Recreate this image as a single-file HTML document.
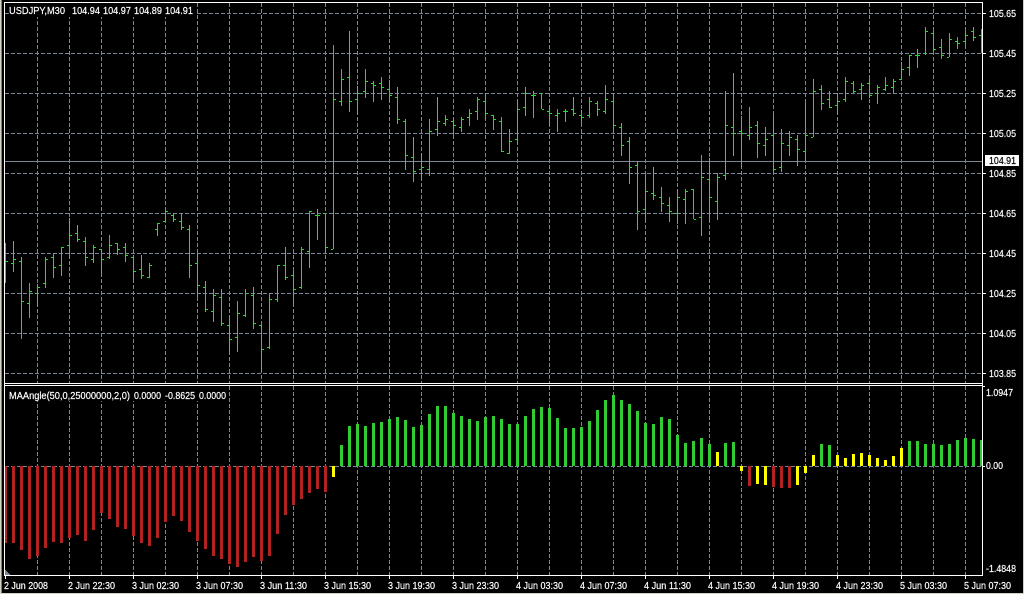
<!DOCTYPE html>
<html><head><meta charset="utf-8"><title>USDJPY,M30</title>
<style>
html,body{margin:0;padding:0;background:#000;width:1024px;height:594px;overflow:hidden}
svg{display:block}
text{font-family:"Liberation Sans",sans-serif;font-size:10.5px;fill:#fff;stroke:#fff;stroke-width:.2px}
</style></head><body>
<svg width="1024" height="594" viewBox="0 0 1024 594" xmlns="http://www.w3.org/2000/svg">
<rect width="1024" height="594" fill="#000"/>
<g shape-rendering="crispEdges">
<path d="M0 0V594M1023 0V594M0 593.5H1024" stroke="#d4d0c8" fill="none" transform="translate(.5 0)"/>
<rect x="1" y="0" width="1" height="594" fill="#808080"/>
<rect x="0" y="593" width="1024" height="1" fill="#d4d0c8"/>
<!-- grid -->
<g stroke="#778899" fill="none" stroke-dasharray="4 2">
<path d="M5 13.5H982M5 53.5H982M5 93.5H982M5 133.5H982M5 173.5H982M5 213.5H982M5 253.5H982M5 293.5H982M5 333.5H982M5 373.5H982M5 466.5H982"/>
<path d="M37.5 3V383M69.5 3V383M101.5 3V383M133.5 3V383M165.5 3V383M197.5 3V383M229.5 3V383M261.5 3V383M293.5 3V383M325.5 3V383M357.5 3V383M389.5 3V383M421.5 3V383M453.5 3V383M485.5 3V383M517.5 3V383M549.5 3V383M581.5 3V383M613.5 3V383M645.5 3V383M677.5 3V383M709.5 3V383M741.5 3V383M773.5 3V383M805.5 3V383M837.5 3V383M869.5 3V383M901.5 3V383M933.5 3V383M965.5 3V383"/>
<path d="M37.5 386V575M69.5 386V575M101.5 386V575M133.5 386V575M165.5 386V575M197.5 386V575M229.5 386V575M261.5 386V575M293.5 386V575M325.5 386V575M357.5 386V575M389.5 386V575M421.5 386V575M453.5 386V575M485.5 386V575M517.5 386V575M549.5 386V575M581.5 386V575M613.5 386V575M645.5 386V575M677.5 386V575M709.5 386V575M741.5 386V575M773.5 386V575M805.5 386V575M837.5 386V575M869.5 386V575M901.5 386V575M933.5 386V575M965.5 386V575"/>
</g>
<!-- covers behind legends -->
<rect x="9" y="3" width="187" height="14" fill="#000"/>
<rect x="9" y="386" width="218" height="15" fill="#000"/>
<!-- price line -->
<path d="M5 161.5H982" stroke="#778899" fill="none"/>
<!-- OHLC bars -->
<path fill="none" stroke="#22e022" d="
M5.5 243V283M6 261.5h2
M13.5 241V272M11 263.5h2M14 259.5h2
M21.5 257V339M19 261.5h2M22 301.5h2
M29.5 283V318M27 303.5h2M30 291.5h2
M37.5 284V306M35 293.5h2M38 287.5h2
M45.5 257V288M43 283.5h2M46 259.5h2
M53.5 253V278M51 257.5h2M54 267.5h2
M61.5 247V276M59 265.5h2M62 247.5h2
M69.5 218V258M67 245.5h2M70 235.5h2
M77.5 225V242M75 233.5h2M78 239.5h2
M85.5 237V266M83 241.5h2M86 257.5h2
M93.5 245V263M91 259.5h2M94 247.5h2
M101.5 249V274M99 249.5h2M102 259.5h2
M109.5 235V259M107 257.5h2M110 245.5h2
M117.5 243V255M115 243.5h2M118 249.5h2
M125.5 243V262M123 247.5h2M126 255.5h2
M133.5 255V280M131 257.5h2M134 271.5h2
M141.5 255V279M139 269.5h2M142 275.5h2
M149.5 263V278M147 277.5h2M150 265.5h2
M157.5 223V236M155 229.5h2M158 223.5h2
M165.5 211V222M163 221.5h2M166 211.5h2
M173.5 213V222M171 215.5h2M174 219.5h2
M181.5 213V230M179 221.5h2M182 227.5h2
M189.5 225V278M187 229.5h2M190 265.5h2
M197.5 253V297M195 263.5h2M198 285.5h2
M205.5 281V312M203 287.5h2M206 309.5h2
M213.5 289V322M211 311.5h2M214 295.5h2
M221.5 289V326M219 297.5h2M222 323.5h2
M229.5 315V352M227 325.5h2M230 339.5h2
M237.5 301V352M235 337.5h2M238 313.5h2
M245.5 289V317M243 315.5h2M246 293.5h2
M253.5 287V329M251 295.5h2M254 323.5h2
M261.5 325V371M259 325.5h2M262 349.5h2
M269.5 293V349M267 347.5h2M270 299.5h2
M277.5 265V302M275 299.5h2M278 265.5h2
M285.5 247V280M283 265.5h2M286 277.5h2
M293.5 271V303M291 275.5h2M294 289.5h2
M301.5 247V289M299 287.5h2M302 249.5h2
M309.5 211V268M307 251.5h2M310 211.5h2
M317.5 209V240M315 215.5h2M318 215.5h2
M325.5 213V254M323 213.5h2M326 247.5h2
M333.5 45V249M331 249.5h2M334 99.5h2
M341.5 69V106M339 101.5h2M342 79.5h2
M349.5 31V112M347 77.5h2M350 101.5h2
M357.5 86V114M355 99.5h2M358 93.5h2
M365.5 69V98M363 91.5h2M366 81.5h2
M373.5 81V102M371 83.5h2M374 85.5h2
M381.5 77V100M379 83.5h2M382 87.5h2
M389.5 80V102M387 89.5h2M390 95.5h2
M397.5 87V124M395 97.5h2M398 119.5h2
M405.5 119V170M403 121.5h2M406 155.5h2
M413.5 137V182M411 157.5h2M414 171.5h2
M421.5 153V179M419 169.5h2M422 167.5h2
M429.5 119V176M427 169.5h2M430 131.5h2
M437.5 97V136M435 129.5h2M438 121.5h2
M445.5 115V126M443 123.5h2M446 119.5h2
M453.5 119V135M451 121.5h2M454 125.5h2
M461.5 117V132M459 127.5h2M462 119.5h2
M469.5 109V126M467 117.5h2M470 113.5h2
M477.5 97V120M475 111.5h2M478 99.5h2
M485.5 93V119M483 101.5h2M486 113.5h2
M493.5 115V130M491 115.5h2M494 119.5h2
M501.5 117V152M499 121.5h2M502 151.5h2
M509.5 129V154M507 153.5h2M510 141.5h2
M517.5 101V144M515 139.5h2M518 109.5h2
M525.5 87V116M523 107.5h2M526 93.5h2
M533.5 91V118M531 95.5h2M534 95.5h2
M541.5 93V109M539 93.5h2M542 109.5h2
M549.5 105V125M547 111.5h2M550 113.5h2
M557.5 109V132M555 115.5h2M558 113.5h2
M565.5 109V122M563 111.5h2M566 111.5h2
M573.5 97V116M571 109.5h2M574 113.5h2
M581.5 110V124M579 115.5h2M582 117.5h2
M589.5 97V118M587 115.5h2M590 101.5h2
M597.5 101V116M595 103.5h2M598 109.5h2
M605.5 85V114M603 111.5h2M606 99.5h2
M613.5 93V131M611 101.5h2M614 125.5h2
M621.5 123V156M619 127.5h2M622 145.5h2
M629.5 137V184M627 141.5h2M630 167.5h2
M637.5 162V230M635 165.5h2M638 211.5h2
M645.5 175V220M643 209.5h2M646 191.5h2
M653.5 167V200M651 193.5h2M654 195.5h2
M661.5 187V212M659 197.5h2M662 203.5h2
M669.5 197V222M667 205.5h2M670 211.5h2
M677.5 190V224M675 213.5h2M678 197.5h2
M685.5 189V224M683 199.5h2M686 191.5h2
M693.5 189V219M691 189.5h2M694 219.5h2
M701.5 155V236M699 217.5h2M702 177.5h2
M709.5 158V222M707 179.5h2M710 197.5h2
M717.5 173V220M715 201.5h2M718 177.5h2
M725.5 91V180M723 175.5h2M726 125.5h2
M733.5 73V156M731 127.5h2M734 133.5h2
M741.5 116V167M739 131.5h2M742 133.5h2
M749.5 107V140M747 135.5h2M750 127.5h2
M757.5 121V158M755 125.5h2M758 143.5h2
M765.5 127V156M763 145.5h2M766 139.5h2
M773.5 115V172M771 135.5h2M774 169.5h2
M781.5 129V172M779 167.5h2M782 143.5h2
M789.5 131V156M787 145.5h2M790 137.5h2
M797.5 135V166M795 139.5h2M798 149.5h2
M805.5 103V161M803 151.5h2M806 135.5h2
M813.5 79V137M811 137.5h2M814 91.5h2
M821.5 85V110M819 89.5h2M822 103.5h2
M829.5 91V108M827 99.5h2M830 107.5h2
M837.5 93V114M835 105.5h2M838 101.5h2
M845.5 77V102M843 99.5h2M846 81.5h2
M853.5 81V93M851 83.5h2M854 91.5h2
M861.5 83V100M859 89.5h2M862 85.5h2
M869.5 79V98M867 83.5h2M870 95.5h2
M877.5 85V104M875 93.5h2M878 87.5h2
M885.5 77V91M883 89.5h2M886 85.5h2
M893.5 79V93M891 87.5h2M894 81.5h2
M901.5 62V80M899 79.5h2M902 69.5h2
M909.5 55V76M907 67.5h2M910 55.5h2
M917.5 49V68M915 55.5h2M918 55.5h2
M925.5 27V55M923 53.5h2M926 31.5h2
M933.5 31V51M931 33.5h2M934 49.5h2
M941.5 39V59M939 47.5h2M942 55.5h2
M949.5 33V57M947 57.5h2M950 39.5h2
M957.5 37V49M955 41.5h2M958 43.5h2
M965.5 31V45M963 41.5h2M966 35.5h2
M973.5 27V41M971 31.5h2M974 37.5h2
M981.5 29V53M979 35.5h2"/>
<!-- histogram -->
<path fill="none" stroke="#b22222" stroke-width="3" d="
M13.5 466V543M21.5 466V550M29.5 466V559M37.5 466V556M45.5 466V548M53.5 466V542M61.5 466V543M69.5 466V538M77.5 466V535M85.5 466V541M93.5 466V530M101.5 466V513M109.5 466V519M117.5 466V527M125.5 466V529M133.5 466V536M141.5 466V543M149.5 466V546M157.5 466V538M165.5 466V522M173.5 466V516M181.5 466V521M189.5 466V532M197.5 466V541M205.5 466V549M213.5 466V556M221.5 466V559M229.5 466V564M237.5 466V567M245.5 466V562M253.5 466V557M261.5 466V561M269.5 466V556M277.5 466V534M285.5 466V515M293.5 466V505M301.5 466V499M309.5 466V493M317.5 466V489M325.5 466V492
M749.5 466V486M773.5 466V487M781.5 466V488M789.5 466V488"/>
<rect x="5" y="466" width="2" height="77" fill="#b22222"/>
<path fill="none" stroke="#32cd32" stroke-width="3" d="
M341.5 445V466M349.5 426V466M357.5 424V466M365.5 426V466M373.5 423V466M381.5 422V466M389.5 419V466M397.5 417V466M405.5 420V466M413.5 427V466M421.5 425V466M429.5 414V466M437.5 406V466M445.5 406V466M453.5 413V466M461.5 416V466M469.5 419V466M477.5 421V466M485.5 417V466M493.5 416V466M501.5 419V466M509.5 424V466M517.5 424V466M525.5 416V466M533.5 409V466M541.5 407V466M549.5 408V466M557.5 418V466M565.5 428V466M573.5 428V466M581.5 427V466M589.5 421V466M597.5 410V466M605.5 400V466M613.5 395V466M621.5 400V466M629.5 404V466M637.5 411V466M645.5 423V466M653.5 424V466M661.5 417V466M669.5 419V466M677.5 435V466M685.5 443V466M693.5 441V466M701.5 438V466M709.5 444V466M725.5 443V466M733.5 442V466
M821.5 444V466M829.5 445V466M909.5 441V466M917.5 441V466M925.5 444V466M933.5 444V466M941.5 445V466M949.5 444V466M957.5 440V466M965.5 438V466M973.5 439V466M981.5 440V466"/>
<path fill="none" stroke="#ffff00" stroke-width="3" d="
M333.5 466V477M717.5 452V466M741.5 466V471M757.5 466V484M765.5 466V485M797.5 466V485M805.5 466V473M813.5 455V466M837.5 455V466M845.5 458V466M853.5 454V466M861.5 453V466M869.5 455V466M877.5 458V466M885.5 460V466M893.5 456V466M901.5 448V466"/>
<!-- corner triangle -->
<path d="M5 570h1v1h1v1h1v1h1v1h1v1H5z" fill="#778899"/>
<!-- frames -->
<path fill="none" stroke="#fff" d="M4.5 576V2.5H982.5V576M4 383.5H983M4 385.5H983M4 575.5H983"/>
<!-- axis ticks -->
<path fill="none" stroke="#fff" d="M983 13.5h3M983 53.5h3M983 93.5h3M983 133.5h3M983 173.5h3M983 213.5h3M983 253.5h3M983 293.5h3M983 333.5h3M983 373.5h3M983 386.5h2M983 466.5h2
M5.5 576v3M69.5 576v3M133.5 576v3M197.5 576v3M261.5 576v3M325.5 576v3M389.5 576v3M453.5 576v3M517.5 576v3M581.5 576v3M645.5 576v3M709.5 576v3M773.5 576v3M837.5 576v3M901.5 576v3M965.5 576v3"/>
<rect x="985" y="155" width="34" height="11" fill="#fff"/>
</g>
<!-- legends -->
<text x="9" y="14" textLength="56" lengthAdjust="spacingAndGlyphs">USDJPY,M30</text>
<text x="72" y="14" textLength="28" lengthAdjust="spacingAndGlyphs">104.94</text>
<text x="103" y="14" textLength="28" lengthAdjust="spacingAndGlyphs">104.97</text>
<text x="134" y="14" textLength="28" lengthAdjust="spacingAndGlyphs">104.89</text>
<text x="165" y="14" textLength="28" lengthAdjust="spacingAndGlyphs">104.91</text>
<text x="9" y="399" textLength="121" lengthAdjust="spacingAndGlyphs">MAAngle(50,0,25000000,2,0)</text>
<text x="134" y="399" textLength="27" lengthAdjust="spacingAndGlyphs">0.0000</text>
<text x="165" y="399" textLength="30" lengthAdjust="spacingAndGlyphs">-0.8625</text>
<text x="199" y="399" textLength="27" lengthAdjust="spacingAndGlyphs">0.0000</text>
<!-- price axis -->
<g>
<text x="989" y="17" textLength="27" lengthAdjust="spacingAndGlyphs">105.65</text>
<text x="989" y="57" textLength="27" lengthAdjust="spacingAndGlyphs">105.45</text>
<text x="989" y="97" textLength="27" lengthAdjust="spacingAndGlyphs">105.25</text>
<text x="989" y="137" textLength="27" lengthAdjust="spacingAndGlyphs">105.05</text>
<text x="989" y="177" textLength="27" lengthAdjust="spacingAndGlyphs">104.85</text>
<text x="989" y="217" textLength="27" lengthAdjust="spacingAndGlyphs">104.65</text>
<text x="989" y="257" textLength="27" lengthAdjust="spacingAndGlyphs">104.45</text>
<text x="989" y="297" textLength="27" lengthAdjust="spacingAndGlyphs">104.25</text>
<text x="989" y="337" textLength="27" lengthAdjust="spacingAndGlyphs">104.05</text>
<text x="989" y="377" textLength="27" lengthAdjust="spacingAndGlyphs">103.85</text>
<text x="989" y="164" textLength="27" lengthAdjust="spacingAndGlyphs" style="fill:#000;stroke:#000">104.91</text>
<text x="986" y="396" textLength="27" lengthAdjust="spacingAndGlyphs">1.0947</text>
<text x="986" y="469" textLength="17" lengthAdjust="spacingAndGlyphs">0.00</text>
<text x="986" y="572" textLength="30" lengthAdjust="spacingAndGlyphs">-1.4848</text>
</g>
<!-- time axis -->
<g>
<text x="4" y="589" textLength="44" lengthAdjust="spacingAndGlyphs">2 Jun 2008</text>
<text x="68" y="589" textLength="47" lengthAdjust="spacingAndGlyphs">2 Jun 22:30</text>
<text x="132" y="589" textLength="47" lengthAdjust="spacingAndGlyphs">3 Jun 02:30</text>
<text x="196" y="589" textLength="47" lengthAdjust="spacingAndGlyphs">3 Jun 07:30</text>
<text x="260" y="589" textLength="47" lengthAdjust="spacingAndGlyphs">3 Jun 11:30</text>
<text x="324" y="589" textLength="47" lengthAdjust="spacingAndGlyphs">3 Jun 15:30</text>
<text x="388" y="589" textLength="47" lengthAdjust="spacingAndGlyphs">3 Jun 19:30</text>
<text x="452" y="589" textLength="47" lengthAdjust="spacingAndGlyphs">3 Jun 23:30</text>
<text x="516" y="589" textLength="47" lengthAdjust="spacingAndGlyphs">4 Jun 03:30</text>
<text x="580" y="589" textLength="47" lengthAdjust="spacingAndGlyphs">4 Jun 07:30</text>
<text x="644" y="589" textLength="47" lengthAdjust="spacingAndGlyphs">4 Jun 11:30</text>
<text x="708" y="589" textLength="47" lengthAdjust="spacingAndGlyphs">4 Jun 15:30</text>
<text x="772" y="589" textLength="47" lengthAdjust="spacingAndGlyphs">4 Jun 19:30</text>
<text x="836" y="589" textLength="47" lengthAdjust="spacingAndGlyphs">4 Jun 23:30</text>
<text x="900" y="589" textLength="47" lengthAdjust="spacingAndGlyphs">5 Jun 03:30</text>
<text x="964" y="589" textLength="47" lengthAdjust="spacingAndGlyphs">5 Jun 07:30</text>
</g>
</svg>
</body></html>
